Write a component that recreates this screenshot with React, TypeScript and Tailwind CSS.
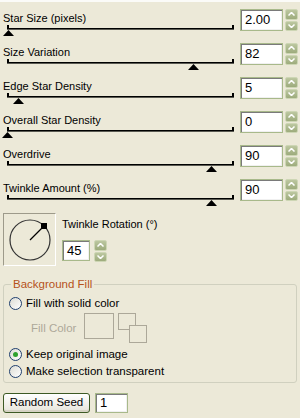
import { useState } from "react";

type SliderRow = { label: string; value: string; pct: number };

const ROWS: SliderRow[] = [
	{ label: "Star Size (pixels)", value: "2.00", pct: 0.5 },
	{ label: "Size Variation", value: "82", pct: 82 },
	{ label: "Edge Star Density", value: "5", pct: 5 },
	{ label: "Overall Star Density", value: "0", pct: 0 },
	{ label: "Overdrive", value: "90", pct: 90 },
	{ label: "Twinkle Amount (%)", value: "90", pct: 90 },
];

function Spinner() {
	return (
		<div className="flex flex-col w-[13px] h-[22px] gap-px">
			{["up", "down"].map((dir) => (
				<div
					key={dir}
					className="flex-1 flex items-center justify-center rounded-[2px] bg-gradient-to-b from-[#bcc7a0] to-[#9dab7c] border border-[#cdd6b4]"
				>
					<svg width="7" height="4" viewBox="0 0 7 4">
						<path
							d={dir === "up" ? "M0.5 3.5 L3.5 0.5 L6.5 3.5" : "M0.5 0.5 L3.5 3.5 L6.5 0.5"}
							fill="none"
							stroke="white"
							strokeWidth="1.5"
						/>
					</svg>
				</div>
			))}
		</div>
	);
}

function NumBox({ value, className }: { value: string; className: string }) {
	return (
		<div
			className={`border border-[#a8b98a] bg-white shadow-[inset_1px_1px_0_#7a7a7a,inset_-1px_-1px_0_#f0f0f0] pl-[4px] flex items-center text-[13px] text-black ${className}`}
		>
			{value}
		</div>
	);
}

function Slider({ pct }: { pct: number }) {
	return (
		<div className="relative ml-[7px] w-[227px] h-[12px]">
			<div className="absolute left-0 right-0 top-[4px] h-px bg-black" />
			<div className="absolute left-0 right-0 top-[5px] h-px bg-[#5a5a52]" />
			<div className="absolute left-0 top-[1px] w-[2px] h-[4px] bg-black" />
			<div className="absolute right-0 top-[1px] w-[2px] h-[4px] bg-black" />
			<svg
				className="absolute top-[6px]"
				style={{ left: `calc(${pct}% - 5px)` }}
				width="11"
				height="6"
				viewBox="0 0 11 6"
			>
				<path d="M5.5 0 L11 6 L0 6 Z" fill="black" />
			</svg>
		</div>
	);
}

function Radio({ checked, label }: { checked?: boolean; label: string }) {
	return (
		<div className="flex items-center gap-[4px] h-[17px]">
			<div className="w-[13px] h-[13px] rounded-full border border-[#1f3f6e] bg-gradient-to-br from-[#dcdcd4] to-white flex items-center justify-center">
				{checked && <div className="w-[5px] h-[5px] rounded-full bg-[#2ea12e]" />}
			</div>
			<span className="text-[11.5px] text-black">{label}</span>
		</div>
	);
}

export default function App() {
	const [seed] = useState("1");

	return (
		<div
			className="w-[300px] h-[418px] bg-[#ece9d8] border-t-2 border-[#fbfbf8] overflow-hidden text-[11px]"
			style={{ fontFamily: '"Liberation Sans", Arial, sans-serif' }}
		>
			<div className="pt-[7px]">
				{ROWS.map((row) => (
					<div key={row.label} className="flex h-[34px] pr-[2px]">
						<div className="flex-1 flex flex-col">
							<div className="h-[15px] pl-[3px] pt-[2px] leading-[14px] text-black">{row.label}</div>
							<Slider pct={row.pct} />
						</div>
						<div className="flex gap-[2px]">
							<NumBox value={row.value} className="w-[43px] h-[22px]" />
							<Spinner />
						</div>
					</div>
				))}
			</div>

			<div className="flex pl-[3px] h-[54px]">
				<div className="w-[53px] h-[53px] border border-t-[#9d9a8a] border-l-[#9d9a8a] border-r-white border-b-white flex items-center justify-center">
					<svg width="46" height="46" viewBox="0 0 46 46">
						<circle cx="23" cy="23" r="20" fill="none" stroke="#333" strokeWidth="1.2" />
						<line x1="23" y1="23" x2="37" y2="9" stroke="black" strokeWidth="1.2" />
						<rect x="34" y="6" width="6" height="6" fill="black" />
					</svg>
				</div>
				<div className="ml-[6px] flex flex-col">
					<div className="leading-[14px] text-black mt-[4px]">Twinkle Rotation (°)</div>
					<div className="flex gap-[4px] mt-[9px]">
						<NumBox value="45" className="w-[28px] h-[21px]" />
						<Spinner />
					</div>
				</div>
			</div>

			<div className="relative mx-[3px] mt-[17px] h-[99px] border border-[#d0d0bf] rounded-[3px] pl-[5px] pt-[10px]">
				<div className="absolute -top-[8px] left-[7px] px-[2px] bg-[#ece9d8] text-[11.5px] leading-[14px] text-[#b5521b]">
					Background Fill
				</div>
				<Radio label="Fill with solid color" />
				<div className="flex items-start h-[32px] mt-[1px]">
					<span className="ml-[22px] mt-[7px] text-[11.5px] text-[#aca899]">Fill Color</span>
					<div className="ml-[8px] w-[30px] h-[26px] border border-[#aca899]" />
					<div className="relative ml-[4px] w-[29px] h-[31px]">
						<div className="absolute left-0 top-0 w-[18px] h-[17px] border border-[#aca899]" />
						<div className="absolute left-[11px] top-[12px] w-[18px] h-[18px] border border-[#aca899] bg-[#ece9d8]" />
					</div>
				</div>
				<div className="mt-[1px]">
					<Radio checked label="Keep original image" />
					<Radio label="Make selection transparent" />
				</div>
			</div>

			<div className="flex gap-[5px] pl-[3px] mt-[10px]">
				<button
					type="button"
					className="w-[87px] h-[20px] rounded-[3px] border border-[#3d5a24] bg-gradient-to-b from-white to-[#e6e4da] shadow-[inset_0_-2px_0_#d6d3c4] text-[11.5px] text-black"
				>
					Random Seed
				</button>
				<NumBox value={seed} className="w-[33px] h-[20px]" />
			</div>
		</div>
	);
}
